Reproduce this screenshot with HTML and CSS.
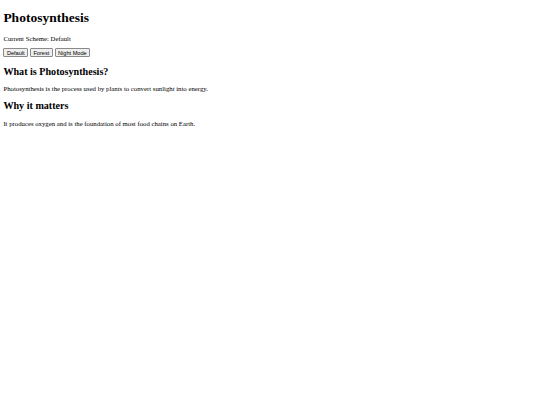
FILE: index.html
```html
<!DOCTYPE html>
<html>
<head>
<meta charset="utf-8">
<link rel="stylesheet" href="styles.css">
</head>
<body class="page">
<h1 class="title">Photosynthesis</h1>
<p class="text">Current Scheme: Default</p>
<div class="buttons">
<button class="btn">Default</button>
<button class="btn">Forest</button>
<button class="btn">Night Mode</button>
</div>
<h2 class="heading">What is Photosynthesis?</h2>
<p class="text">Photosynthesis is the process used by plants to convert sunlight into energy.</p>
<h2 class="heading">Why it matters</h2>
<p class="text">It produces oxygen and is the foundation of most food chains on Earth.</p>
</body>
</html>
```
FILE: styles.css
```css
html { background: #fff; }
.page {
  margin: 3.375px;
  font-family: "Liberation Serif", "Times New Roman", serif;
  font-size: 6.75px;
  color: #000;
}
.title {
  font-size: 13.5px;
  font-weight: bold;
  margin: 6.3px 0 9.05px;
}
.heading {
  font-size: 10.125px;
  font-weight: bold;
  margin: 8.4px 0;
}
.text {
  margin: 6.75px 0;
}
.buttons {
  display: flex;
  gap: 1.7px;
}
.btn {
  font-family: "Liberation Sans", Arial, sans-serif;
  font-size: 5.625px;
  padding: 0.42px 2.53px;
  border: 0.85px solid #8a8a8a;
  border-radius: 1px;
  background: #efefef;
  color: #000;
  margin: 0;
}
```
